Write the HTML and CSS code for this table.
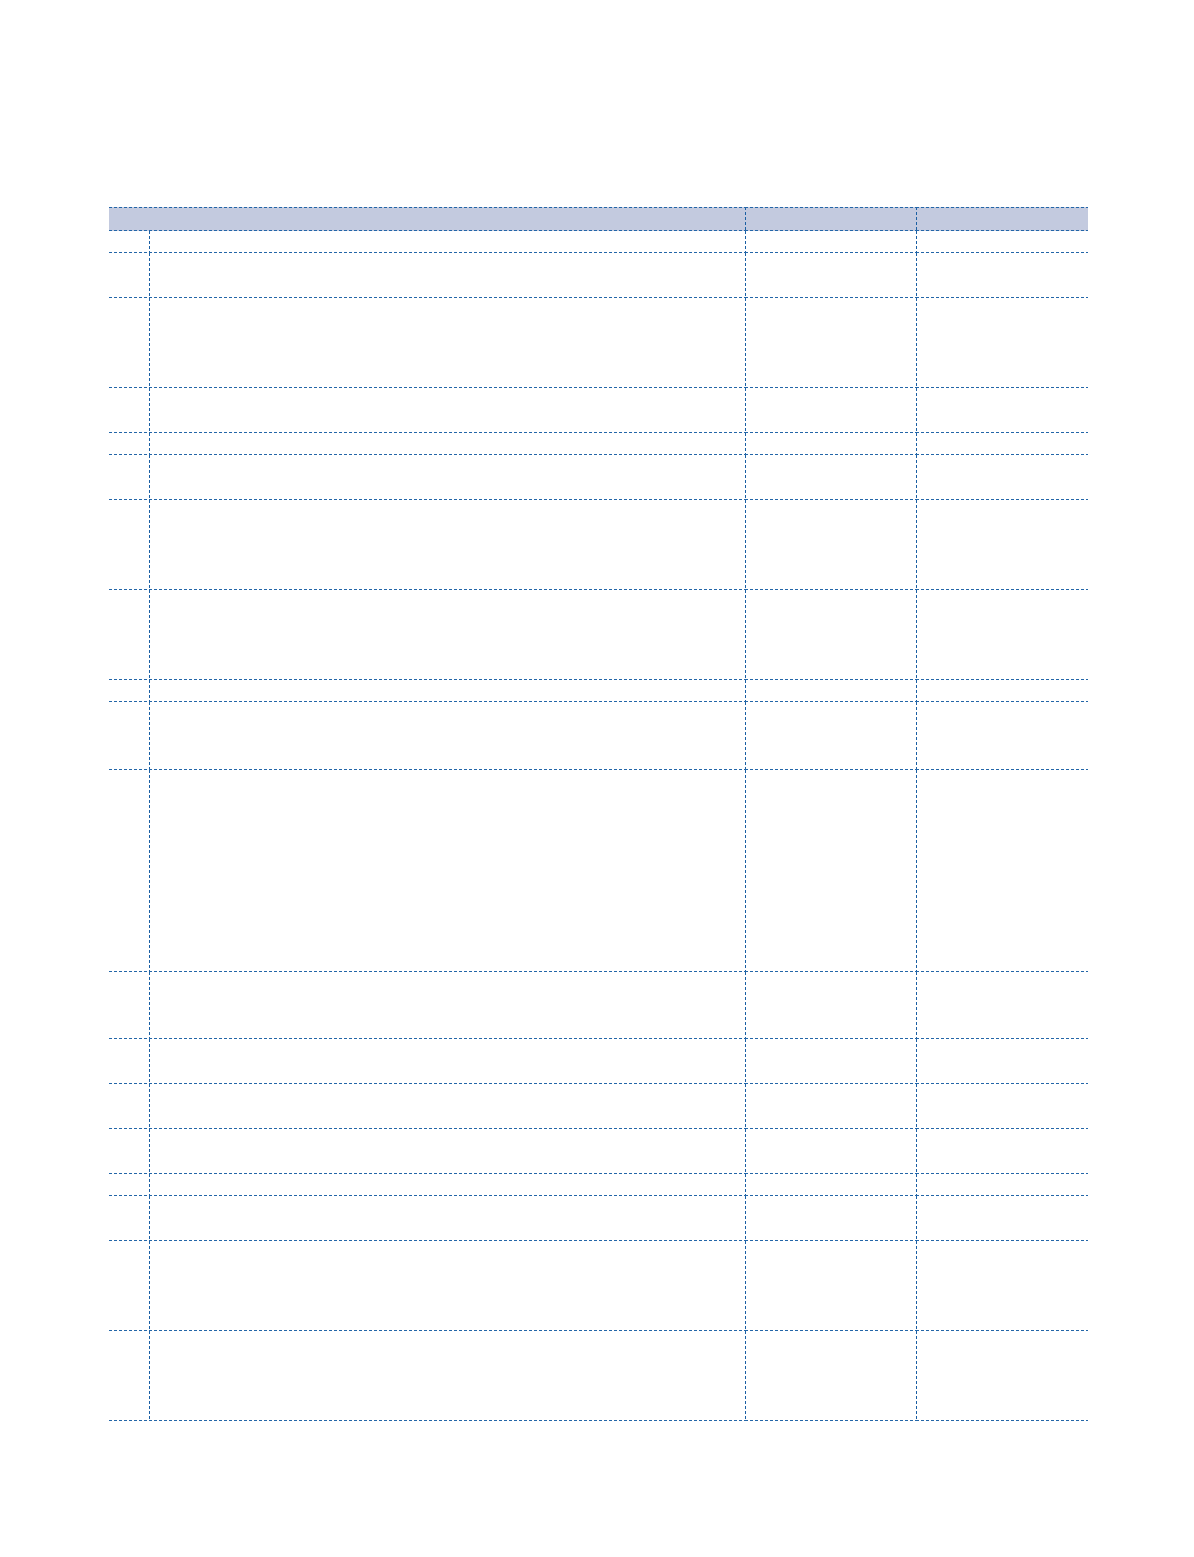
FILE: index.html
```html
<!DOCTYPE html>
<html>
<head>
<meta charset="utf-8">
<link rel="stylesheet" href="styles.css">
</head>
<body>
<div class="page">
  <div class="sheet">
    <div class="cell head span2"></div>
    <div class="cell head vl"></div>
    <div class="cell head vl"></div>
  </div>
  <div class="sheet body">
    <div class="cell"></div><div class="cell vl"></div><div class="cell vl"></div><div class="cell vl"></div>
    <div class="cell"></div><div class="cell vl"></div><div class="cell vl"></div><div class="cell vl"></div>
    <div class="cell"></div><div class="cell vl"></div><div class="cell vl"></div><div class="cell vl"></div>
    <div class="cell"></div><div class="cell vl"></div><div class="cell vl"></div><div class="cell vl"></div>
    <div class="cell"></div><div class="cell vl"></div><div class="cell vl"></div><div class="cell vl"></div>
    <div class="cell"></div><div class="cell vl"></div><div class="cell vl"></div><div class="cell vl"></div>
    <div class="cell"></div><div class="cell vl"></div><div class="cell vl"></div><div class="cell vl"></div>
    <div class="cell"></div><div class="cell vl"></div><div class="cell vl"></div><div class="cell vl"></div>
    <div class="cell"></div><div class="cell vl"></div><div class="cell vl"></div><div class="cell vl"></div>
    <div class="cell"></div><div class="cell vl"></div><div class="cell vl"></div><div class="cell vl"></div>
    <div class="cell"></div><div class="cell vl"></div><div class="cell vl"></div><div class="cell vl"></div>
    <div class="cell"></div><div class="cell vl"></div><div class="cell vl"></div><div class="cell vl"></div>
    <div class="cell"></div><div class="cell vl"></div><div class="cell vl"></div><div class="cell vl"></div>
    <div class="cell"></div><div class="cell vl"></div><div class="cell vl"></div><div class="cell vl"></div>
    <div class="cell"></div><div class="cell vl"></div><div class="cell vl"></div><div class="cell vl"></div>
    <div class="cell"></div><div class="cell vl"></div><div class="cell vl"></div><div class="cell vl"></div>
    <div class="cell"></div><div class="cell vl"></div><div class="cell vl"></div><div class="cell vl"></div>
    <div class="cell"></div><div class="cell vl"></div><div class="cell vl"></div><div class="cell vl"></div>
    <div class="cell"></div><div class="cell vl"></div><div class="cell vl"></div><div class="cell vl"></div>
  </div>
</div>
</body>
</html>
```

FILE: styles.css
```css
html, body {
  margin: 0;
  padding: 0;
  background: #ffffff;
  font-family: "Liberation Sans", Arial, sans-serif;
}

.page {
  padding-top: 207px;
  padding-left: 109px;
  width: 979px;
}

.sheet {
  display: grid;
  grid-template-columns: 40px 596px 171px 172px;
}

.sheet.body {
  grid-template-rows: 22px 45px 90px 45px 22px 45px 90px 90px 22px 68px 202px 67px 45px 45px 45px 22px 45px 90px 90px;
}

.cell {
  box-sizing: border-box;
  background:
    repeating-linear-gradient(to right, #2366a8 0 3px, transparent 3px 5px) left bottom / 100% 1px no-repeat;
}

.cell.vl {
  background:
    repeating-linear-gradient(to right, #2366a8 0 3px, transparent 3px 5px) left bottom / 100% 1px no-repeat,
    repeating-linear-gradient(to bottom, #1a5fa3 0 3px, transparent 3px 5px) left top / 1px 100% no-repeat;
}

.cell.head {
  height: 24px;
  background:
    repeating-linear-gradient(to right, #2366a8 0 3px, transparent 3px 5px) left top / 100% 1px no-repeat,
    repeating-linear-gradient(to right, #2366a8 0 3px, transparent 3px 5px) left bottom / 100% 1px no-repeat,
    #c3cadf;
}

.cell.head.vl {
  background:
    repeating-linear-gradient(to right, #2366a8 0 3px, transparent 3px 5px) left top / 100% 1px no-repeat,
    repeating-linear-gradient(to right, #2366a8 0 3px, transparent 3px 5px) left bottom / 100% 1px no-repeat,
    repeating-linear-gradient(to bottom, #1a5fa3 0 3px, transparent 3px 5px) left top / 1px 100% no-repeat,
    #c3cadf;
}

.cell.span2 {
  grid-column: span 2;
}
```
